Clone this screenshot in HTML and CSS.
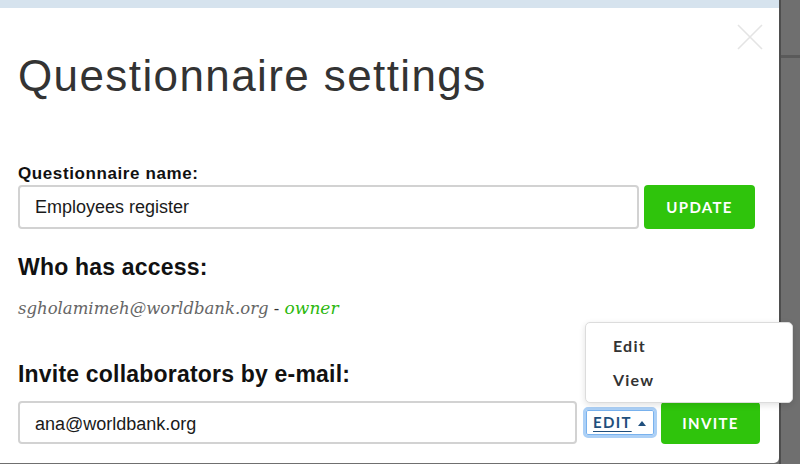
FILE: index.html
```html
<!DOCTYPE html>
<html>
<head>
<meta charset="utf-8">
<link rel="stylesheet" href="styles.css">
</head>
<body>
<div class="screen">
  <div class="modal-col">
    <div class="band"></div>
    <div class="modal">
      <span class="close"><svg width="26" height="26" viewBox="0 0 26 26"><path d="M1 1 L25 25 M25 1 L1 25" stroke="#e4e4e4" stroke-width="1.6" fill="none"/></svg></span>
      <h1 class="title">Questionnaire settings</h1>
      <div class="label">Questionnaire name:</div>
      <div class="row row-name">
        <div class="input input-name">Employees register</div>
        <div class="btn btn-update">UPDATE</div>
      </div>
      <h2 class="heading heading-access">Who has access:</h2>
      <p class="access"><span class="email">sgholamimeh@worldbank.org</span> <span class="dash">-</span> <span class="role">owner</span></p>
      <h2 class="heading heading-invite">Invite collaborators by e-mail:</h2>
      <div class="row row-invite">
        <div class="input input-mail">ana@worldbank.org</div>
        <div class="select-wrap">
          <div class="select"><span class="select-text">EDIT</span><span class="caret"></span></div>
          <ul class="menu">
            <li class="menu-item">Edit</li>
            <li class="menu-item">View</li>
          </ul>
        </div>
        <div class="btn btn-invite">INVITE</div>
      </div>
    </div>
  </div>
  <div class="strip"><div class="strip-line"></div></div>
</div>
</body>
</html>
```

FILE: styles.css
```css
html, body {
  margin: 0;
  padding: 0;
}
body {
  width: 800px;
  height: 464px;
  overflow: hidden;
  background: #6f6f6f;
  font-family: "Liberation Sans", Arial, sans-serif;
}
.screen {
  display: flex;
  height: 464px;
}
.modal-col {
  width: 781px;
  display: flex;
  flex-direction: column;
  background: #6f6f6f;
}
.band {
  height: 8px;
  background: #d6e3ee;
}
.modal {
  flex: 1;
  position: relative;
  background: #ffffff;
  padding: 44px 0 0 18px;
  border-bottom-right-radius: 5px;
  margin-bottom: 1px;
}
.close {
  position: absolute;
  left: 737px;
  top: 16px;
  width: 26px;
  height: 26px;
  display: block;
}
.close svg { display: block; }
.title {
  margin: 0;
  font-weight: 400;
  font-size: 44px;
  line-height: 48px;
  color: #333333;
  letter-spacing: 1.4px;
}
.label {
  margin-top: 65px;
  font-weight: 700;
  font-size: 17px;
  line-height: 18px;
  color: #111111;
  letter-spacing: 0.6px;
}
.row {
  display: flex;
  align-items: center;
}
.row-name {
  margin-top: 2px;
  height: 44px;
  gap: 5px;
}
.input {
  box-sizing: border-box;
  border: 2px solid #d2d2d2;
  border-radius: 4px;
  padding: 0 15px;
  font-size: 18px;
  color: #1a1a1a;
  background: #fff;
}
.input-name {
  width: 621px;
  height: 44px;
  line-height: 40px;
}
.btn {
  box-sizing: border-box;
  background: #2fc40c;
  color: #ffffff;
  border-radius: 4px;
  font-family: Lato, "Open Sans", sans-serif;
  font-weight: 700;
  font-size: 15px;
  letter-spacing: 1.3px;
  text-align: center;
}
.btn-update {
  width: 111px;
  height: 44px;
  line-height: 44px;
}
.heading {
  margin: 0;
  font-weight: 700;
  font-size: 23px;
  line-height: 26px;
  color: #111111;
  letter-spacing: 0.2px;
}
.heading-access { margin-top: 25px; }
.access {
  margin: 18px 0 0 0;
  font-family: "DejaVu Serif", Georgia, serif;
  font-style: italic;
  font-size: 16.5px;
  line-height: 20px;
  color: #666666;
}
.access .dash {
  font-style: normal;
  font-family: "Liberation Sans", Arial, sans-serif;
  color: #333;
}
.access .role {
  color: #2cb80e;
  font-size: 17px;
}
.heading-invite { margin-top: 42px; }
.row-invite {
  margin-top: 14px;
  height: 43px;
}
.input-mail {
  width: 559px;
  height: 43px;
  line-height: 42px;
  margin-right: 6px;
}
.select-wrap {
  position: relative;
  margin-right: 4px;
}
.select {
  box-sizing: border-box;
  width: 74px;
  height: 31px;
  border: 3px solid #acd0f6;
  box-shadow: inset 0 0 0 1px #79b2ee;
  border-radius: 5px;
  padding-left: 7px;
  display: flex;
  align-items: center;
  font-family: Lato, "Open Sans", sans-serif;
  font-weight: 700;
  font-size: 15px;
  letter-spacing: 1.3px;
  color: #1f4f7d;
}
.select-text {
  text-decoration: underline;
  text-underline-offset: 3px;
  line-height: 25px;
}
.caret {
  width: 0;
  height: 0;
  border-left: 4px solid transparent;
  border-right: 4px solid transparent;
  border-bottom: 5px solid #1f4f7d;
  margin-left: 6px;
  margin-top: 1px;
}
.menu {
  position: absolute;
  z-index: 10;
  left: 2px;
  top: -85px;
  width: 208px;
  box-sizing: border-box;
  margin: 0;
  list-style: none;
  padding: 6px 0 5px 0;
  background: #ffffff;
  border: 1px solid #dcdcdc;
  border-radius: 5px;
  box-shadow: 0 2px 6px rgba(0,0,0,0.12);
}
.menu-item {
  padding-left: 27px;
  font-family: Lato, "Open Sans", sans-serif;
  font-weight: 700;
  font-size: 16px;
  line-height: 34px;
  letter-spacing: 1.2px;
  color: #333333;
}
.btn-invite {
  width: 99px;
  height: 42px;
  line-height: 42px;
}
.strip {
  width: 19px;
  background: #6f6f6f;
  border-left: 2px solid #4e4e4e;
}
.strip-line {
  margin-top: 55px;
  height: 3px;
  background: #5a5a5a;
}
```
